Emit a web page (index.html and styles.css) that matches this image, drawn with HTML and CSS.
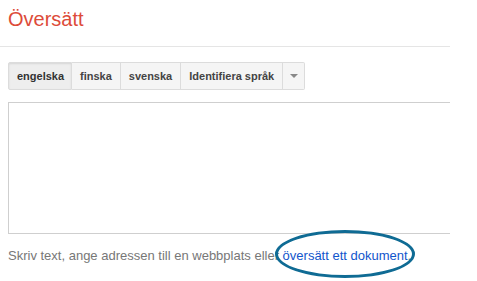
FILE: index.html
```html
<!DOCTYPE html>
<html lang="sv">
<head>
    <meta charset="UTF-8">
    <title>Översätt</title>
    <link rel="stylesheet" href="styles.css">
</head>
<body>
    <div id="page">
        <div class="header">
            <h1 class="title">Översätt</h1>
        </div>
        <div class="main">
            <div class="lang-bar">
                <button class="lang selected">engelska</button>
                <button class="lang">finska</button>
                <button class="lang">svenska</button>
                <button class="lang">Identifiera språk</button>
                <button class="lang more"><span class="arrow"></span></button>
            </div>
            <div class="source"></div>
            <p class="hint">Skriv text, ange adressen till en webbplats eller <a href="#" class="doc-link">översätt ett dokument</a>.</p>
        </div>
    </div>
    <span class="circle"></span>
</body>
</html>
```

FILE: styles.css
```css
*{
    box-sizing: border-box;
}
body{
    margin: 0;
    font-family: "Liberation Sans", Arial, sans-serif;
    background-color: white;
}
#page{
    width: 450px;
}
.header{
    height: 47px;
    border-bottom: 1px solid #e5e5e5;
    padding: 7px 8px 0;
}
.title{
    margin: 0;
    font-size: 20px;
    font-weight: normal;
    color: #dd4b39;
    line-height: 24px;
}
.main{
    padding: 15px 0 0 8px;
}
.lang-bar{
    display: flex;
    height: 28px;
}
.lang{
    font-family: "Liberation Sans", Arial, sans-serif;
    font-size: 11px;
    font-weight: bold;
    color: #444;
    background-color: #f5f5f5;
    border: 1px solid #dcdcdc;
    border-left: none;
    padding: 0 8px;
    margin: 0;
    height: 28px;
    cursor: pointer;
}
.lang:first-child{
    border-left: 1px solid #dcdcdc;
    border-radius: 2px 0 0 2px;
}
.lang.selected{
    background-color: #eeeeee;
    color: #333;
    box-shadow: inset 0 1px 2px rgba(0,0,0,0.1);
    width: 64px;
}
.lang.more{
    width: 22px;
    padding: 0;
    border-radius: 0 2px 2px 0;
    display: flex;
    align-items: center;
    justify-content: center;
}
.arrow{
    border-left: 4px solid transparent;
    border-right: 4px solid transparent;
    border-top: 4px solid #888;
}
.source{
    margin-top: 12px;
    height: 132px;
    border: 1px solid #cfcfcf;
    border-right: none;
}
.hint{
    margin: 14px 0 0;
    font-size: 13px;
    color: #777;
    line-height: 16px;
}
.doc-link{
    color: #1155cc;
    text-decoration: none;
}
/* annotation drawn over the link */
.circle{
    position: absolute;
    left: 275px;
    top: 230px;
    width: 140px;
    height: 48px;
    border: 3px solid #0f6b94;
    border-radius: 50%;
    pointer-events: none;
}
```
